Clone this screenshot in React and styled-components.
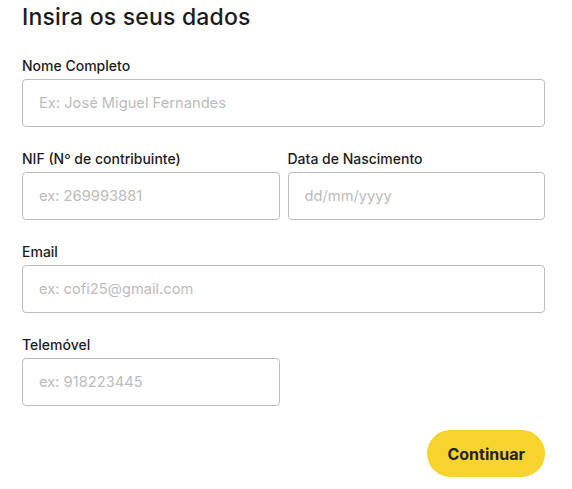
import React from "react";
import styled, { createGlobalStyle } from "styled-components";

const GlobalStyle = createGlobalStyle`
  body {
    margin: 0;
    background: #ffffff;
    font-family: Inter, "Open Sans", sans-serif;
  }
`;

const Page = styled.div`
  padding: 3px 27px 0 22px;
  color: #1c1c1c;
`;

const Title = styled.h1`
  margin: 0 0 25px;
  font-size: 23px;
  font-weight: 500;
  line-height: 28px;
  letter-spacing: 0.2px;
`;

const Form = styled.form`
  display: grid;
  grid-template-columns: 1fr 1fr;
  column-gap: 8px;
  row-gap: 22px;
`;

const Field = styled.label`
  display: flex;
  flex-direction: column;
  gap: 4px;
  grid-column: ${(p) => (p.wide ? "1 / -1" : "auto")};
`;

const Label = styled.span`
  font-size: 14px;
  font-weight: 500;
  line-height: 19px;
`;

const Input = styled.input`
  box-sizing: border-box;
  height: 48px;
  width: 100%;
  padding: 0 16px;
  border: 1px solid #bdbdbd;
  border-radius: 4px;
  font-family: inherit;
  font-size: 14.7px;
  color: #1c1c1c;
  outline: none;

  &::placeholder {
    color: #bcbcbc;
  }
`;

const Footer = styled.div`
  display: flex;
  justify-content: flex-end;
  margin-top: 24px;
`;

const Button = styled.button`
  height: 47px;
  padding: 0 20px;
  border: none;
  border-radius: 24px;
  background: #f6d32d;
  color: #222;
  font-family: inherit;
  font-size: 16px;
  font-weight: 700;
  cursor: pointer;
`;

export default function App() {
  return (
    <>
      <GlobalStyle />
      <Page>
        <Title>Insira os seus dados</Title>
        <Form onSubmit={(e) => e.preventDefault()}>
          <Field wide>
            <Label>Nome Completo</Label>
            <Input placeholder="Ex: José Miguel Fernandes" />
          </Field>
          <Field>
            <Label>NIF (Nº de contribuinte)</Label>
            <Input placeholder="ex: 269993881" />
          </Field>
          <Field>
            <Label>Data de Nascimento</Label>
            <Input placeholder="dd/mm/yyyy" />
          </Field>
          <Field wide>
            <Label>Email</Label>
            <Input placeholder="ex: cofi25@gmail.com" />
          </Field>
          <Field>
            <Label>Telemóvel</Label>
            <Input placeholder="ex: 918223445" />
          </Field>
        </Form>
        <Footer>
          <Button type="submit">Continuar</Button>
        </Footer>
      </Page>
    </>
  );
}
